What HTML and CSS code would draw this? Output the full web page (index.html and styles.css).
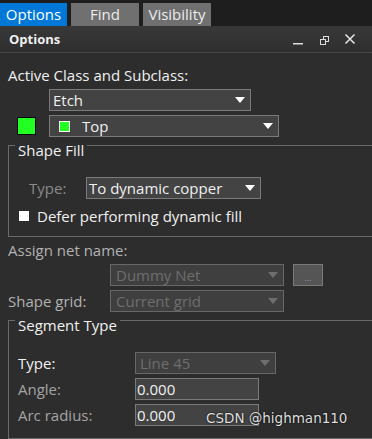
FILE: index.html
```html
<!DOCTYPE html>
<html lang="en">
  <head>
    <meta charset="UTF-8" />
    <title>Options</title>
    <link rel="stylesheet" href="styles.css">
  </head>
  <body>
    <div class="tabs">
      <div class="tab tab-active">Options</div>
      <div class="tab">Find</div>
      <div class="tab">Visibility</div>
    </div>

    <div class="head">
      <span class="head-title">Options</span>
      <div class="head-btns">
        <!-- minimize -->
        <svg width="12" height="12" viewBox="0 0 12 12">
          <rect x="1" y="10" width="10" height="1.5" fill="#dcdcdc" />
        </svg>
        <!-- restore / float -->
        <svg width="12" height="12" viewBox="0 0 12 12">
          <rect x="5.5" y="3.5" width="5" height="5" fill="none" stroke="#dcdcdc" />
          <rect x="2.5" y="6.5" width="5" height="5" fill="#333" stroke="#dcdcdc" />
        </svg>
        <!-- close -->
        <svg width="12" height="12" viewBox="0 0 12 12">
          <path d="M1.5 1.5 L10.5 10.5 M10.5 1.5 L1.5 10.5" stroke="#e6e6e6" stroke-width="1.5" />
        </svg>
      </div>
    </div>

    <div class="panel">
      <div class="label">Active Class and Subclass:</div>
      <div class="row row-class">
        <div class="dd dd-etch"><span class="dd-text">Etch</span><i class="arrow"></i></div>
      </div>
      <div class="row row-sub">
        <span class="swatch"></span>
        <div class="dd dd-top">
          <span class="mini"></span>
          <span class="dd-text">Top</span>
          <i class="arrow"></i>
        </div>
      </div>

      <fieldset class="group">
        <legend>Shape Fill</legend>
        <div class="frow fill-row">
          <span class="flabel fill-label">Type:</span>
          <div class="dd dd-fill"><span class="dd-text">To dynamic copper</span><i class="arrow"></i></div>
        </div>
        <div class="check">
          <span class="box"></span>
          <span>Defer performing dynamic fill</span>
        </div>
      </fieldset>

      <div class="label label-soft net-label">Assign net name:</div>
      <div class="frow net-row">
        <div class="dd dd-off dd-net"><span class="dd-text">Dummy Net</span><i class="arrow"></i></div>
        <div class="more">...</div>
      </div>
      <div class="frow grid-row">
        <span class="grid-label label-soft">Shape grid:</span>
        <div class="dd dd-off dd-net"><span class="dd-text">Current grid</span><i class="arrow"></i></div>
      </div>

      <fieldset class="group seg">
        <legend>Segment Type</legend>
        <div class="frow">
          <span class="seg-label">Type:</span>
          <div class="dd dd-off dd-line"><span class="dd-text">Line 45</span><i class="arrow"></i></div>
        </div>
        <div class="frow seg-row">
          <span class="seg-label label-dim">Angle:</span>
          <div class="field">0.000</div>
        </div>
        <div class="frow seg-row">
          <span class="seg-label label-dim">Arc radius:</span>
          <div class="field">0.000</div>
        </div>
      </fieldset>
    </div>

    <div class="mark">CSDN @highman110</div>
  </body>
</html>
```

FILE: styles.css
```css
* {
  box-sizing: border-box;
}

body {
  margin: 0;
  width: 372px;
  height: 439px;
  overflow: hidden;
  position: relative;
  background-color: #2d2d2d;
  color: #f0f0f0;
  font-family: "Open Sans", "Noto Sans", sans-serif;
  font-size: 15px;
}

/* 顶部标签页 */
.tabs {
  display: flex;
  gap: 4px;
  height: 26px;
  padding-top: 3px;
  background-color: #1e1e1e;
}
.tab {
  width: 68px;
  height: 23px;
  line-height: 23px;
  text-align: center;
  background-color: #707070;
  color: #ececec;
}
.tab-active {
  width: 67px;
  background-color: #0078d7;
  color: #fff;
}

/* 面板标题栏 */
.head {
  height: 27px;
  display: flex;
  align-items: center;
  justify-content: space-between;
  padding: 0 16px 0 9px;
  background: linear-gradient(#383838, #2f2f2f);
  border-bottom: 1px solid #474747;
}
.head-title {
  font-weight: 700;
  font-size: 13px;
  line-height: 26px;
}
.head-btns {
  display: flex;
  gap: 14px;
}
.head-btns svg {
  display: block;
}

.panel {
  padding: 12px 0 0 8px;
}

.label {
  line-height: 20px;
}
.label-soft {
  color: #b2b2b2;
}
.label-dim {
  color: #a4a4a4;
}

.row {
  display: flex;
  align-items: center;
  margin-top: 4px;
}
.row-class {
  padding-left: 41px;
}
.row-sub {
  padding-left: 9px;
  gap: 13px;
}

/* 下拉框 */
.dd {
  height: 22px;
  display: flex;
  align-items: center;
  border: 1px solid #7a7a7a;
  background-color: #434343;
  padding: 0 5px 0 3px;
  line-height: 20px;
}
.dd-text {
  flex: 1;
  white-space: nowrap;
}
.arrow {
  width: 0;
  height: 0;
  border-left: 5px solid transparent;
  border-right: 5px solid transparent;
  border-top: 6px solid #fff;
}
.dd-etch {
  width: 202px;
}
.dd-top {
  width: 230px;
  padding-left: 9px;
}
.dd-fill {
  width: 175px;
  padding-left: 2px;
}

.swatch {
  width: 19px;
  height: 18px;
  border: 1px solid #000;
  background-color: #22ff22;
}
.mini {
  width: 11px;
  height: 11px;
  border: 1px solid #fff;
  background-color: #22ff22;
  margin-right: 12px;
}

/* 分组框 */
.group {
  margin: -7px -10px 0 0;
  border: 1px solid #6a6a6a;
  padding: 17px 0 10px 6px;
  min-width: 0;
}
.group legend {
  padding: 10px 3px 0;
  line-height: 20px;
}

.frow {
  display: flex;
  align-items: center;
}
.fill-label {
  width: 57px;
  margin-left: 14px;
  color: #8a8a8a;
  line-height: 20px;
}
.check {
  display: flex;
  align-items: center;
  margin-top: 7px;
  padding-left: 4px;
  line-height: 20px;
}
.box {
  width: 10px;
  height: 10px;
  background-color: #fff;
  margin-right: 8px;
}

.net-label {
  margin-top: 3px;
}
.net-row {
  margin-top: 4px;
  padding-left: 102px;
  gap: 9px;
}
.grid-row {
  margin-top: 4px;
}
.grid-label {
  width: 102px;
  line-height: 20px;
}
.dd-off {
  background-color: #3f3f3f;
  border-color: #676767;
  color: #6e6e6e;
}
.dd-off .arrow {
  border-top-color: #6e6e6e;
}
.dd-net {
  width: 174px;
  padding-left: 5px;
}
.more {
  width: 30px;
  height: 22px;
  border: 1px solid #7a7a7a;
  background-color: #555;
  color: #8d9cb4;
  font-size: 9px;
  line-height: 26px;
  text-align: center;
}

.seg {
  padding-bottom: 12px;
}
.seg-label {
  width: 117px;
  margin-left: 3px;
  line-height: 20px;
}
.dd-line {
  width: 141px;
  padding-left: 4px;
}
.seg-row {
  margin-top: 4px;
}
.field {
  width: 124px;
  height: 22px;
  border: 1px solid #7a7a7a;
  background-color: #434343;
  padding-left: 1px;
  line-height: 20px;
}

/* 水印 */
.mark {
  position: absolute;
  left: 206px;
  top: 410px;
  font-family: "DejaVu Sans", sans-serif;
  font-size: 13.5px;
  color: #dedede;
  text-shadow: 0 0 2px #000;
}
```
